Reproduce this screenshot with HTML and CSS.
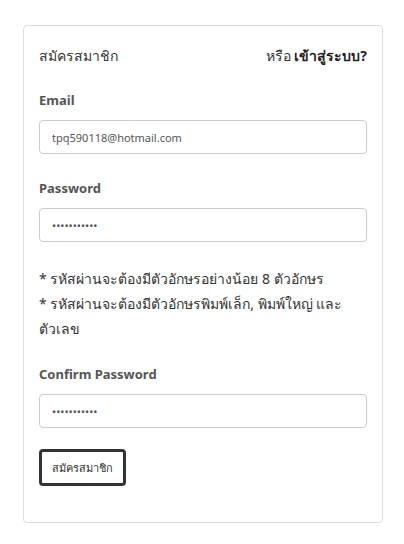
FILE: index.html
```html
<!DOCTYPE html>
<html lang="th">
<head>
  <meta charset="UTF-8">
  <meta name="viewport" content="width=device-width, initial-scale=1.0">
  <title>สมัครสมาชิก</title>
  <link rel="stylesheet" href="styles.css">
</head>
<body>
  <div class="panel">
    <div class="panel-head">
      <span class="panel-title">สมัครสมาชิก</span>
      <span class="panel-alt">หรือ <a href="#">เข้าสู่ระบบ?</a></span>
    </div>

    <form id="registerForm">
      <div class="field">
        <label for="email">Email</label>
        <input type="text" id="email" value="tpq590118@hotmail.com">
      </div>
      <div class="field">
        <label for="password">Password</label>
        <input type="password" id="password" value="12345678901">
      </div>
      <ul class="hints">
        <li>* รหัสผ่านจะต้องมีตัวอักษรอย่างน้อย 8 ตัวอักษร</li>
        <li>* รหัสผ่านจะต้องมีตัวอักษรพิมพ์เล็ก, พิมพ์ใหญ่ และตัวเลข</li>
      </ul>
      <div class="field">
        <label for="confirm">Confirm Password</label>
        <input type="password" id="confirm" value="12345678901">
      </div>
      <button type="submit">สมัครสมาชิก</button>
    </form>
  </div>
</body>
</html>
```

FILE: styles.css
```css
body {
  margin: 0;
  padding: 25px 21px 24px 23px;
  background-color: #fff;
  font-family: "Noto Sans", "DejaVu Sans", sans-serif;
  color: #333;
}

.panel {
  border: 1px solid #ddd;
  border-radius: 4px;
  padding: 16px 15px 36px 15px;
}

.panel-head {
  display: flex;
  justify-content: space-between;
  align-items: center;
  font-size: 14px;
  height: 28px;
  margin-bottom: 21px;
}

.panel-alt a {
  color: #222;
  font-weight: bold;
  text-decoration: none;
}

.field {
  margin-bottom: 25px;
}

.field label {
  display: block;
  font-size: 13px;
  font-weight: bold;
  color: #555;
  margin-bottom: 11px;
}

.field input {
  width: 100%;
  box-sizing: border-box;
  height: 34px;
  padding: 6px 12px;
  font-size: 11px;
  color: #555;
  border: 1px solid #ccc;
  border-radius: 4px;
  font-family: inherit;
}

.hints {
  list-style: none;
  margin: -1px 0 24px;
  padding: 0;
  font-size: 14px;
  line-height: 25px;
  color: #333;
}

button {
  margin-top: -4px;
  padding: 7px 10px 6px;
  font-size: 11px;
  font-family: inherit;
  color: #333;
  background-color: #fff;
  border: 3px solid #333;
  border-radius: 4px;
  cursor: pointer;
}
```
